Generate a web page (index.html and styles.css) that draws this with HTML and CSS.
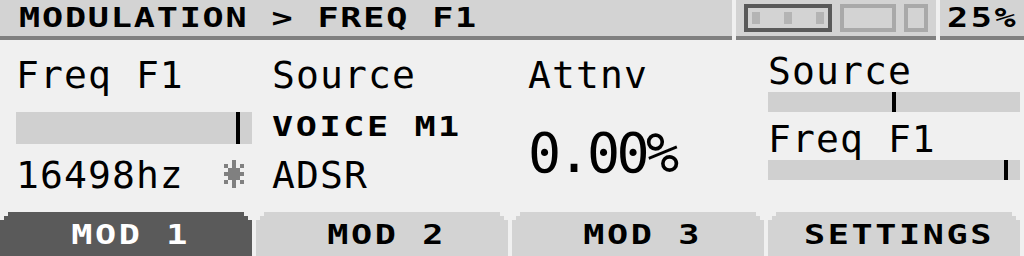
FILE: index.html
```html
<!DOCTYPE html>
<html lang="en">
<head>
    <meta charset="UTF-8">
    <meta name="viewport" content="width=device-width, initial-scale=1.0">
    <title>Modulation - Freq F1</title>
    <link rel="stylesheet" href="styles.css">
</head>
<body>
    <div class="screen">
        <header class="topbar">
            <div class="segment crumb"><span class="wide-text">MODULATION &gt; FREQ F1</span></div>
            <div class="segment status">
                <div class="cell full">
                    <span class="pip"></span>
                    <span class="pip"></span>
                    <span class="pip"></span>
                </div>
                <div class="cell empty"></div>
                <div class="cell small"></div>
            </div>
            <div class="segment level"><span class="wide-text">25%</span></div>
        </header>

        <main class="params">
            <div class="col">
                <div class="label">Freq F1</div>
                <div class="bar wide"><span class="marker" style="left: 93.2%"></span></div>
                <div class="value-row">
                    <span class="label">16498hz</span>
                    <!-- link indicator -->
                    <svg class="star" width="20" height="28" viewBox="0 0 5 7" shape-rendering="crispEdges">
                        <path fill="#808080" d="M2 0h1v7h-1z M0 1h1v1h-1z M4 1h1v1h-1z M1 2h3v3h-3z M0 3h5v1h-5z M0 5h1v1h-1z M4 5h1v1h-1z"/>
                    </svg>
                </div>
            </div>

            <div class="col">
                <div class="label">Source</div>
                <div class="caps source-name"><span class="wide-text">VOICE M1</span></div>
                <div class="label source-type">ADSR</div>
            </div>

            <div class="col">
                <div class="label">Attnv</div>
                <div class="big">0.00%</div>
            </div>

            <div class="col side">
                <div class="label first">Source</div>
                <div class="bar thin"><span class="marker" style="left: 49.2%"></span></div>
                <div class="label second">Freq F1</div>
                <div class="bar thin"><span class="marker" style="left: 93.7%"></span></div>
            </div>
        </main>

        <nav class="tabs">
            <div class="tab active"><span class="wide-text">MOD 1</span></div>
            <div class="tab"><span class="wide-text">MOD 2</span></div>
            <div class="tab"><span class="wide-text">MOD 3</span></div>
            <div class="tab"><span class="wide-text">SETTINGS</span></div>
        </nav>
    </div>
</body>
</html>
```

FILE: styles.css
```css
body {
    margin: 0;
    background-color: #f0f0f0;
    font-family: "DejaVu Sans Mono", "Liberation Mono", monospace;
    color: #000;
}

.screen {
    width: 1024px;
    height: 256px;
    overflow: hidden;
}

/* top bar */
.topbar {
    display: flex;
    gap: 4px;
    height: 40px;
}

.segment {
    box-sizing: border-box;
    height: 40px;
    background-color: #d3d3d3;
    border-bottom: 4px solid #808080;
}

/* blocky caps font, widened to match the display's glyphs */
.crumb,
.level,
.caps,
.tab {
    font-weight: bold;
    font-size: 27px;
    line-height: 36px;
    letter-spacing: 2px;
    white-space: nowrap;
}

.wide-text {
    display: inline-block;
    transform: scaleX(1.3);
    transform-origin: left center;
}

.crumb {
    width: 732px;
    padding-left: 19px;
    box-sizing: border-box;
    letter-spacing: 1.4px;
}

.status {
    width: 200px;
    display: flex;
    align-items: flex-start;
    gap: 8px;
    padding: 4px 8px;
}

.cell {
    box-sizing: border-box;
    height: 28px;
    border: 4px solid #a9a9a9;
}

.cell.full {
    width: 88px;
    border-color: #5a5a5a;
    display: flex;
    justify-content: space-between;
    padding: 4px;
}

.cell.empty {
    width: 56px;
}

.cell.small {
    width: 24px;
}

.pip {
    width: 8px;
    height: 12px;
    background-color: #b4b4b4;
}

.level {
    flex: 1;
    padding-left: 7px;
}

/* parameter area */
.params {
    display: grid;
    grid-template-columns: 256px 256px 240px 252px;
    box-sizing: border-box;
    height: 172px;
    padding: 15px 0 0 16px;
}

.col {
    display: flex;
    flex-direction: column;
    align-items: flex-start;
}

.label {
    font-size: 38px;
    line-height: 40px;
    letter-spacing: 1.1px;
    white-space: nowrap;
}

.bar {
    position: relative;
    background-color: #d0d0d0;
}

.bar.wide {
    width: 236px;
    height: 32px;
    margin-top: 17px;
}

.bar.thin {
    width: 252px;
    height: 20px;
    margin-top: 1px;
}

.marker {
    position: absolute;
    top: 0;
    bottom: 0;
    width: 4px;
    background-color: #000;
}

.value-row {
    display: flex;
    align-items: flex-start;
    width: 236px;
    margin-top: 11px;
}

.star {
    margin: 5px 8px 0 auto;
}

.source-name {
    margin-top: 17px;
    line-height: 29px;
}

.source-type {
    margin-top: 14px;
}

.big {
    margin-top: 34px;
    font-size: 55px;
    line-height: 48px;
    letter-spacing: -3.6px;
}

.side .first {
    margin-top: -4px;
}

.side .second {
    margin-top: 7px;
}

/* tabs */
.tabs {
    display: flex;
    gap: 4px;
}

.tab {
    width: 252px;
    height: 44px;
    box-sizing: border-box;
    padding-top: 5px;
    padding-left: 10px;
    text-align: center;
    background-color: #d3d3d3;
    clip-path: polygon(8px 0, calc(100% - 8px) 0, calc(100% - 8px) 4px, calc(100% - 4px) 4px, calc(100% - 4px) 8px, 100% 8px, 100% 100%, 0 100%, 0 8px, 4px 8px, 4px 4px, 8px 4px);
}

.tab .wide-text {
    transform-origin: center;
}

.tab.active {
    background-color: #5a5a5a;
    color: #fff;
}
```
